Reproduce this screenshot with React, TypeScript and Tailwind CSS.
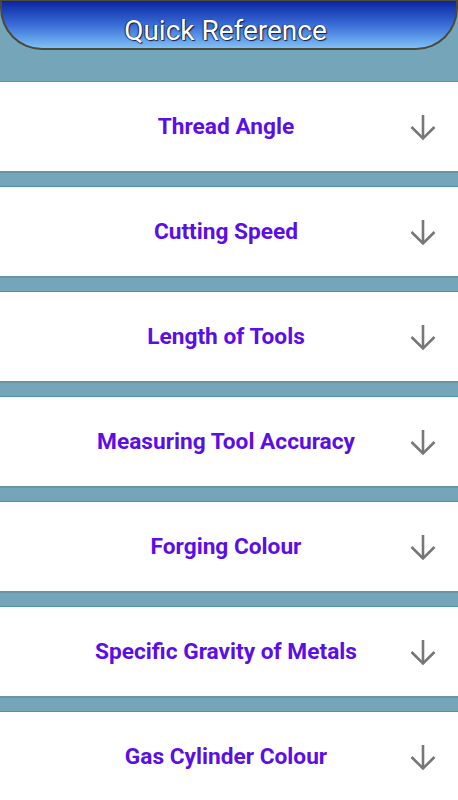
const items = [
    "Thread Angle",
    "Cutting Speed",
    "Length of Tools",
    "Measuring Tool Accuracy",
    "Forging Colour",
    "Specific Gravity of Metals",
    "Gas Cylinder Colour",
]

function ArrowDown() {
    return (
        <svg width="28" height="28" viewBox="0 0 28 28" fill="none" stroke="#777777" strokeWidth="2.6" strokeLinecap="butt">
            <path d="M14 2 V25" />
            <path d="M2.5 14 L14 25.5 L25.5 14" strokeLinejoin="miter" />
        </svg>
    )
}

export default function App() {
    return (
        <div className="w-[458px] h-[800px] overflow-hidden bg-[#74a5b8] font-['Roboto',sans-serif]">
            <div className="h-[50px] rounded-b-[42px] border-2 border-t border-[#4a4a3c] bg-gradient-to-b from-[#0f21a0] via-[#3a6bd6] to-[#80c0f4] flex items-end justify-center pb-[3px]">
                <h1 className="text-white text-[28px] leading-none pr-[7px] [text-shadow:1px_1px_1px_#1a1a3a,-1px_0_1px_#1a2a6a]">Quick Reference</h1>
            </div>
            <div className="h-[32px] border-b border-[#5f95a8]"></div>
            {items.map((item) => (
                <div key={item}>
                    <div className="h-[89px] bg-white flex items-center">
                        <span className="flex-1 text-center pl-[64px] pt-[2px] text-[22.7px] font-bold text-[#5b0ee8]">{item}</span>
                        <div className="w-[70px] flex justify-center">
                            <ArrowDown />
                        </div>
                    </div>
                    <div className="h-[16px] border-t-[2px] border-t-[#6a93a3] border-b border-b-[#4f93a8]"></div>
                </div>
            ))}
        </div>
    )
}
